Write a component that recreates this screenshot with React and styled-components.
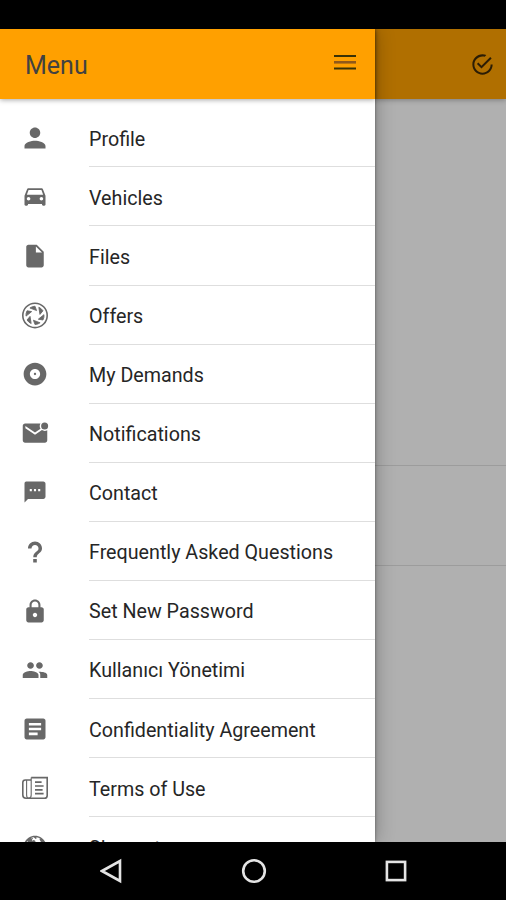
import styled, { createGlobalStyle } from "styled-components";
import {
  IoMdPerson,
  IoMdCar,
  IoMdDocument,
  IoMdDisc,
  IoMdMailUnread,
  IoMdText,
  IoMdHelp,
  IoMdLock,
  IoMdPeople,
  IoMdListBox,
  IoMdGlobe,
  IoMdCheckmarkCircleOutline,
} from "react-icons/io";

const ApertureIcon = () => (
  <svg viewBox="-1 -1.4 28 28" fill="none" stroke="currentColor">
    <circle cx="13" cy="13" r="12.2" strokeWidth="1.6" />
    {[0, 60, 120, 180, 240, 300].map((angle) => (
      <path
        key={angle}
        d="M7.9 5.6 Q10 4 13 3.8 L14.6 8.2 Z"
        fill="currentColor"
        strokeWidth="0.8"
        transform={`rotate(${angle} 13 13)`}
      />
    ))}
  </svg>
);

const PaperIcon = () => (
  <svg viewBox="-1 -1 28 28" fill="none" stroke="currentColor" strokeWidth="1.6">
    <path d="M9.2 2.6 H25.2 V20.4 Q25.2 23.2 22.4 23.2 H4 Q.8 23.2 .8 20 V7.6 Q.8 5 3.4 5 H9.2" />
    <path d="M9.2 2.6 V20 Q9.2 23.2 6.6 23.2 Q4.6 23 4.6 20 V5" strokeWidth="1.1" />
    <path d="M13 7.2 H19.6 M13 11 H21.6 M13 14.8 H20.6 M13 18.6 H21.6" strokeWidth="1.7" />
  </svg>
);

const menuItems = [
  { label: "Profile", icon: IoMdPerson },
  { label: "Vehicles", icon: IoMdCar },
  { label: "Files", icon: IoMdDocument },
  { label: "Offers", icon: ApertureIcon },
  { label: "My Demands", icon: IoMdDisc },
  { label: "Notifications", icon: IoMdMailUnread },
  { label: "Contact", icon: IoMdText },
  { label: "Frequently Asked Questions", icon: IoMdHelp },
  { label: "Set New Password", icon: IoMdLock },
  { label: "Kullanıcı Yönetimi", icon: IoMdPeople },
  { label: "Confidentiality Agreement", icon: IoMdListBox },
  { label: "Terms of Use", icon: PaperIcon },
  { label: "Sign out", icon: IoMdGlobe },
];

const App = () => {
  return (
    <>
      <GlobalStyle />
      <Screen>
        <StatusBar />
        <Body>
          <Drawer>
            <Header>
              <Title>Menu</Title>
              <MenuButton aria-label="Close menu">
                <svg width="22" height="16" viewBox="0 0 22 16">
                  <path d="M0 2H22M0 14.5H22" stroke="#3a3206" strokeWidth="2" />
                  <path d="M0 8.3H22" stroke="#91591a" strokeWidth="2.6" />
                </svg>
              </MenuButton>
            </Header>
            <List>
              {menuItems.map(({ label, icon: Icon }) => (
                <Item key={label}>
                  <IconBox>
                    <Icon />
                  </IconBox>
                  <Label>{label}</Label>
                </Item>
              ))}
            </List>
          </Drawer>
          <Page>
            <PageHeader>
              <IoMdCheckmarkCircleOutline />
            </PageHeader>
            <PageBlock $height={367} />
            <PageBlock $height={100} />
          </Page>
        </Body>
        <NavBar>
          <svg width="22" height="26" viewBox="0 0 22 26">
            <path d="M2 13 L20 3 V23 Z" />
          </svg>
          <svg width="26" height="26" viewBox="0 0 26 26">
            <circle cx="13" cy="13" r="10.8" />
          </svg>
          <svg width="22" height="22" viewBox="0 0 22 22">
            <rect x="1.9" y="1.9" width="18.2" height="18.2" />
          </svg>
        </NavBar>
      </Screen>
    </>
  );
};

const GlobalStyle = createGlobalStyle`
  * {
    box-sizing: border-box;
  }

  body {
    margin: 0;
    background: #000;
    font-family: Roboto, "Noto Sans", sans-serif;
  }
`;

const Screen = styled.div`
  display: flex;
  flex-direction: column;
  width: 506px;
  height: 900px;
  overflow: hidden;
  background: #000;
`;

const StatusBar = styled.div`
  flex: 0 0 29px;
`;

const Body = styled.div`
  display: flex;
  flex: 1;
  min-height: 0;
  overflow: hidden;
`;

const Drawer = styled.aside`
  display: flex;
  flex-direction: column;
  flex: 0 0 375px;
  position: relative;
  z-index: 1;
  background: #fff;
  box-shadow: 0 0 18px rgba(0, 0, 0, 0.3), 0 0 3px rgba(0, 0, 0, 0.4);
`;

const Header = styled.header`
  display: flex;
  flex: 0 0 70px;
  align-items: center;
  justify-content: space-between;
  padding: 0 19px 0 25px;
  background: #ffa000;
  box-shadow: 0 1px 5px rgba(0, 0, 0, 0.35);
`;

const Title = styled.h1`
  margin: 2px 0 0;
  color: #424242;
  font-size: 25px;
  font-weight: 400;
`;

const MenuButton = styled.button`
  display: flex;
  margin: 0 0 4px;
  padding: 0;
  border: 0;
  background: none;
`;

const List = styled.ul`
  flex: 1;
  min-height: 0;
  margin: 0;
  padding: 9.3px 0 0;
  overflow: hidden;
  list-style: none;
`;

const Item = styled.li`
  display: flex;
  height: 59.1px;
`;

const IconBox = styled.span`
  display: flex;
  flex: 0 0 89px;
  align-items: center;
  padding: 0 0 0 21px;
  color: #686868;

  svg {
    width: 28px;
    height: 28px;
  }
`;

const Label = styled.span`
  display: flex;
  flex: 1;
  align-items: center;
  padding-top: 3.6px;
  border-bottom: 1px solid #dedede;
  color: #262626;
  font-size: 19.7px;
  white-space: nowrap;
`;

const Page = styled.main`
  flex: 1;
  background: #b0b0b0;
`;

const PageHeader = styled.div`
  display: flex;
  align-items: center;
  justify-content: flex-end;
  height: 70px;
  padding-right: 11px;
  background: #b06f00;
  color: #2b1d05;
  box-shadow: 0 1px 5px rgba(0, 0, 0, 0.3);

  svg {
    width: 25px;
    height: 25px;
  }
`;

const PageBlock = styled.div`
  height: ${({ $height }) => $height}px;
  border-bottom: 1px solid #9c9c9c;
`;

const NavBar = styled.nav`
  display: flex;
  flex: 0 0 58px;
  align-items: center;
  justify-content: space-between;
  padding: 0 99px 0 100px;
  background: #000;

  svg {
    fill: none;
    stroke: #e4e4e4;
    stroke-width: 2.6;
  }
`;

export default App;
